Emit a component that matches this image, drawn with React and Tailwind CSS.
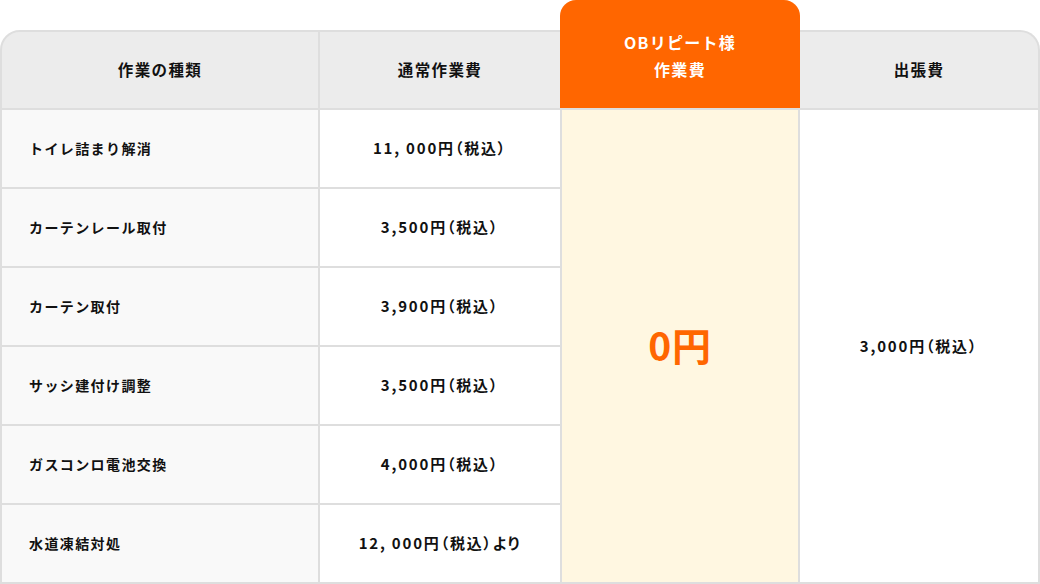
const ROWS = [
  ['トイレ詰まり解消', '11, 000円（税込）'],
  ['カーテンレール取付', '3,500円（税込）'],
  ['カーテン取付', '3,900円（税込）'],
  ['サッシ建付け調整', '3,500円（税込）'],
  ['ガスコンロ電池交換', '4,000円（税込）'],
  ['水道凍結対処', '12, 000円（税込）より'],
];

const FONT = "font-['Noto_Sans_CJK_JP','Noto_Sans',sans-serif]";

export default function App() {
  return (
    <div className={`w-[1040px] h-[584px] bg-white ${FONT} font-bold text-[#111]`}>
      <div className="grid grid-cols-[320px_240px_240px_240px] grid-rows-[110px_repeat(6,79px)]">
        {/* header row */}
        <div className="flex items-end">
          <div className="flex h-[80px] w-full items-center justify-center rounded-tl-[20px] border-2 border-[#dedede] bg-[#ececec] text-[15.5px] tracking-[0.09em]">
            作業の種類
          </div>
        </div>
        <div className="flex items-end">
          <div className="flex h-[80px] w-full items-center justify-center border-t-2 border-b-2 border-[#dedede] bg-[#ececec] text-[15.5px] tracking-[0.09em]">
            通常作業費
          </div>
        </div>
        <div className="flex flex-col items-center justify-center rounded-t-[16px] border-b-2 border-[#dedede] bg-[#ff6600] pt-1 text-[16px] leading-[27px] tracking-[0.08em] text-white">
          <span>OBリピート様</span>
          <span>作業費</span>
        </div>
        <div className="flex items-end">
          <div className="flex h-[80px] w-full items-center justify-center rounded-tr-[20px] border-t-2 border-r-2 border-b-2 border-[#dedede] bg-[#ececec] text-[15.5px] tracking-[0.09em]">
            出張費
          </div>
        </div>

        {/* body */}
        {ROWS.map(([name, price], i) => (
          <div key={name} className="contents">
            <div
              className="flex items-center border-l-2 border-r-2 border-b-2 border-[#dedede] bg-[#f9f9f9] pl-[27px] text-[14px] tracking-[0.1em]"
              style={{ gridRow: i + 2, gridColumn: 1 }}
            >
              {name}
            </div>
            <div
              className="flex items-center justify-center border-b-2 border-[#dedede] bg-white text-[15px] tracking-[0.12em] [font-feature-settings:'palt']"
              style={{ gridRow: i + 2, gridColumn: 2 }}
            >
              {price}
            </div>
          </div>
        ))}
        <div className="col-start-3 row-span-6 row-start-2 flex items-center justify-center border-x-2 border-b-2 border-[#dedede] bg-[#fff7e1] pb-1 text-[39px] tracking-[0.02em] text-[#ff6600]">
          0円
        </div>
        <div className="col-start-4 row-span-6 row-start-2 flex items-center justify-center border-r-2 border-b-2 border-[#dedede] bg-white text-[15px] tracking-[0.12em] [font-feature-settings:'palt']">
          3,000円（税込）
        </div>
      </div>
    </div>
  );
}
